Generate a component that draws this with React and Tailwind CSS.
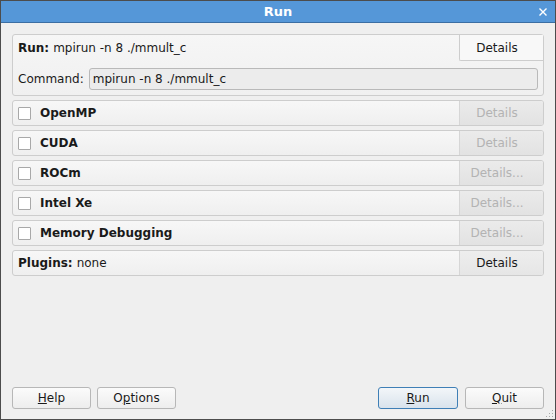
import React from 'react';

const ROWS = [
  { name: 'OpenMP', action: 'Details' },
  { name: 'CUDA', action: 'Details' },
  { name: 'ROCm', action: 'Details...' },
  { name: 'Intel Xe', action: 'Details...' },
  { name: 'Memory Debugging', action: 'Details...' },
];

function Checkbox() {
  return <div className="h-[13px] w-[13px] shrink-0 rounded-[1px] border border-[#a8a8a8] bg-white" />;
}

function OptionRow({ name, action }) {
  return (
    <div className="mt-[4px] flex h-[26px] overflow-hidden rounded-[3px] border border-[#cdcdcd] bg-gradient-to-b from-[#f7f7f7] to-[#efefef]">
      <div className="flex flex-1 items-center pl-[5px]">
        <Checkbox />
        <span className="ml-[9px] font-bold">{name}</span>
      </div>
      <div className="flex w-[84px] items-center justify-center border-l border-[#d6d6d6] bg-gradient-to-b from-[#ebebeb] to-[#e2e2e2] pr-[9px] text-[#b3b3b3]">
        {action}
      </div>
    </div>
  );
}

function Button({ children, primary }) {
  return (
    <button
      type="button"
      className={
        primary
          ? 'h-[22px] w-[80px] rounded-[3px] border border-[#3f7fb6] bg-gradient-to-b from-[#f3f6f9] to-[#d9e3ec] text-[#1a1a1a]'
          : 'h-[22px] w-[79px] rounded-[3px] border border-[#b7b7b7] bg-gradient-to-b from-[#fbfbfb] to-[#ededed] text-[#1a1a1a]'
      }
    >
      {children}
    </button>
  );
}

function Grip() {
  const dots = [
    [7, 1],
    [4, 4], [7, 4],
    [1, 7], [4, 7], [7, 7],
  ];
  return (
    <svg className="absolute bottom-[1px] right-[1px]" width="9" height="9" viewBox="0 0 9 9">
      {dots.map(([x, y]) => (
        <rect key={`${x}-${y}`} x={x} y={y} width="1" height="1" fill="#a9a9a9" />
      ))}
    </svg>
  );
}

export default function App() {
  return (
    <div className="relative flex h-[420px] w-[556px] flex-col border border-[#4c4c4c] font-['DejaVu_Sans',sans-serif] text-[12px] text-[#1a1a1a]">
      <div className="relative flex h-[22px] shrink-0 items-center justify-center border-b border-[#3b6ea3] bg-[#5597d8]">
        <span className="text-[13px] font-bold text-white">Run</span>
        <svg className="absolute right-[8px] top-[7px]" width="8" height="8" viewBox="0 0 8 8">
          <path d="M0.5 0.5 L7.5 7.5 M7.5 0.5 L0.5 7.5" stroke="white" strokeWidth="1.4" />
        </svg>
      </div>

      <div className="flex flex-1 flex-col bg-[#efefef] px-[11px] pt-[11px]">
        <div className="rounded-[3px] border border-[#cdcdcd] bg-gradient-to-b from-[#f6f6f6] to-[#f0f0f0]">
          <div className="flex h-[26px]">
            <div className="flex flex-1 items-center pl-[5px]">
              <span className="font-bold">Run:</span>
              <span className="ml-[4px]">mpirun -n 8 ./mmult_c</span>
            </div>
            <div className="flex w-[84px] items-center justify-center rounded-bl-[2px] border-b border-l border-[#cdcdcd] bg-[#f8f8f8] pr-[9px]">
              Details
            </div>
          </div>
          <div className="flex items-center px-[5px] pb-[5px] pt-[7px]">
            <span>Command:</span>
            <div className="ml-[5px] flex h-[22px] flex-1 items-center rounded-[3px] border border-[#b9b9b9] bg-[#ececec] px-[3px]">
              mpirun -n 8 ./mmult_c
            </div>
          </div>
        </div>

        {ROWS.map((row) => (
          <OptionRow key={row.name} {...row} />
        ))}

        <div className="mt-[4px] flex h-[26px] overflow-hidden rounded-[3px] border border-[#cdcdcd] bg-gradient-to-b from-[#f7f7f7] to-[#efefef]">
          <div className="flex flex-1 items-center pl-[5px]">
            <span className="font-bold">Plugins:</span>
            <span className="ml-[4px]">none</span>
          </div>
          <div className="flex w-[84px] items-center justify-center border-l border-[#d6d6d6] bg-gradient-to-b from-[#eeeeee] to-[#e6e6e6] pr-[9px]">
            Details
          </div>
        </div>

        <div className="flex-1" />

        <div className="flex items-center pb-[10px]">
          <Button>
            <span className="underline">H</span>elp
          </Button>
          <div className="ml-[6px]">
            <Button>
              O<span className="underline">p</span>tions
            </Button>
          </div>
          <div className="flex-1" />
          <Button primary>
            <span className="underline">R</span>un
          </Button>
          <div className="ml-[7px]">
            <Button>
              <span className="underline">Q</span>uit
            </Button>
          </div>
        </div>
      </div>
      <Grip />
    </div>
  );
}
